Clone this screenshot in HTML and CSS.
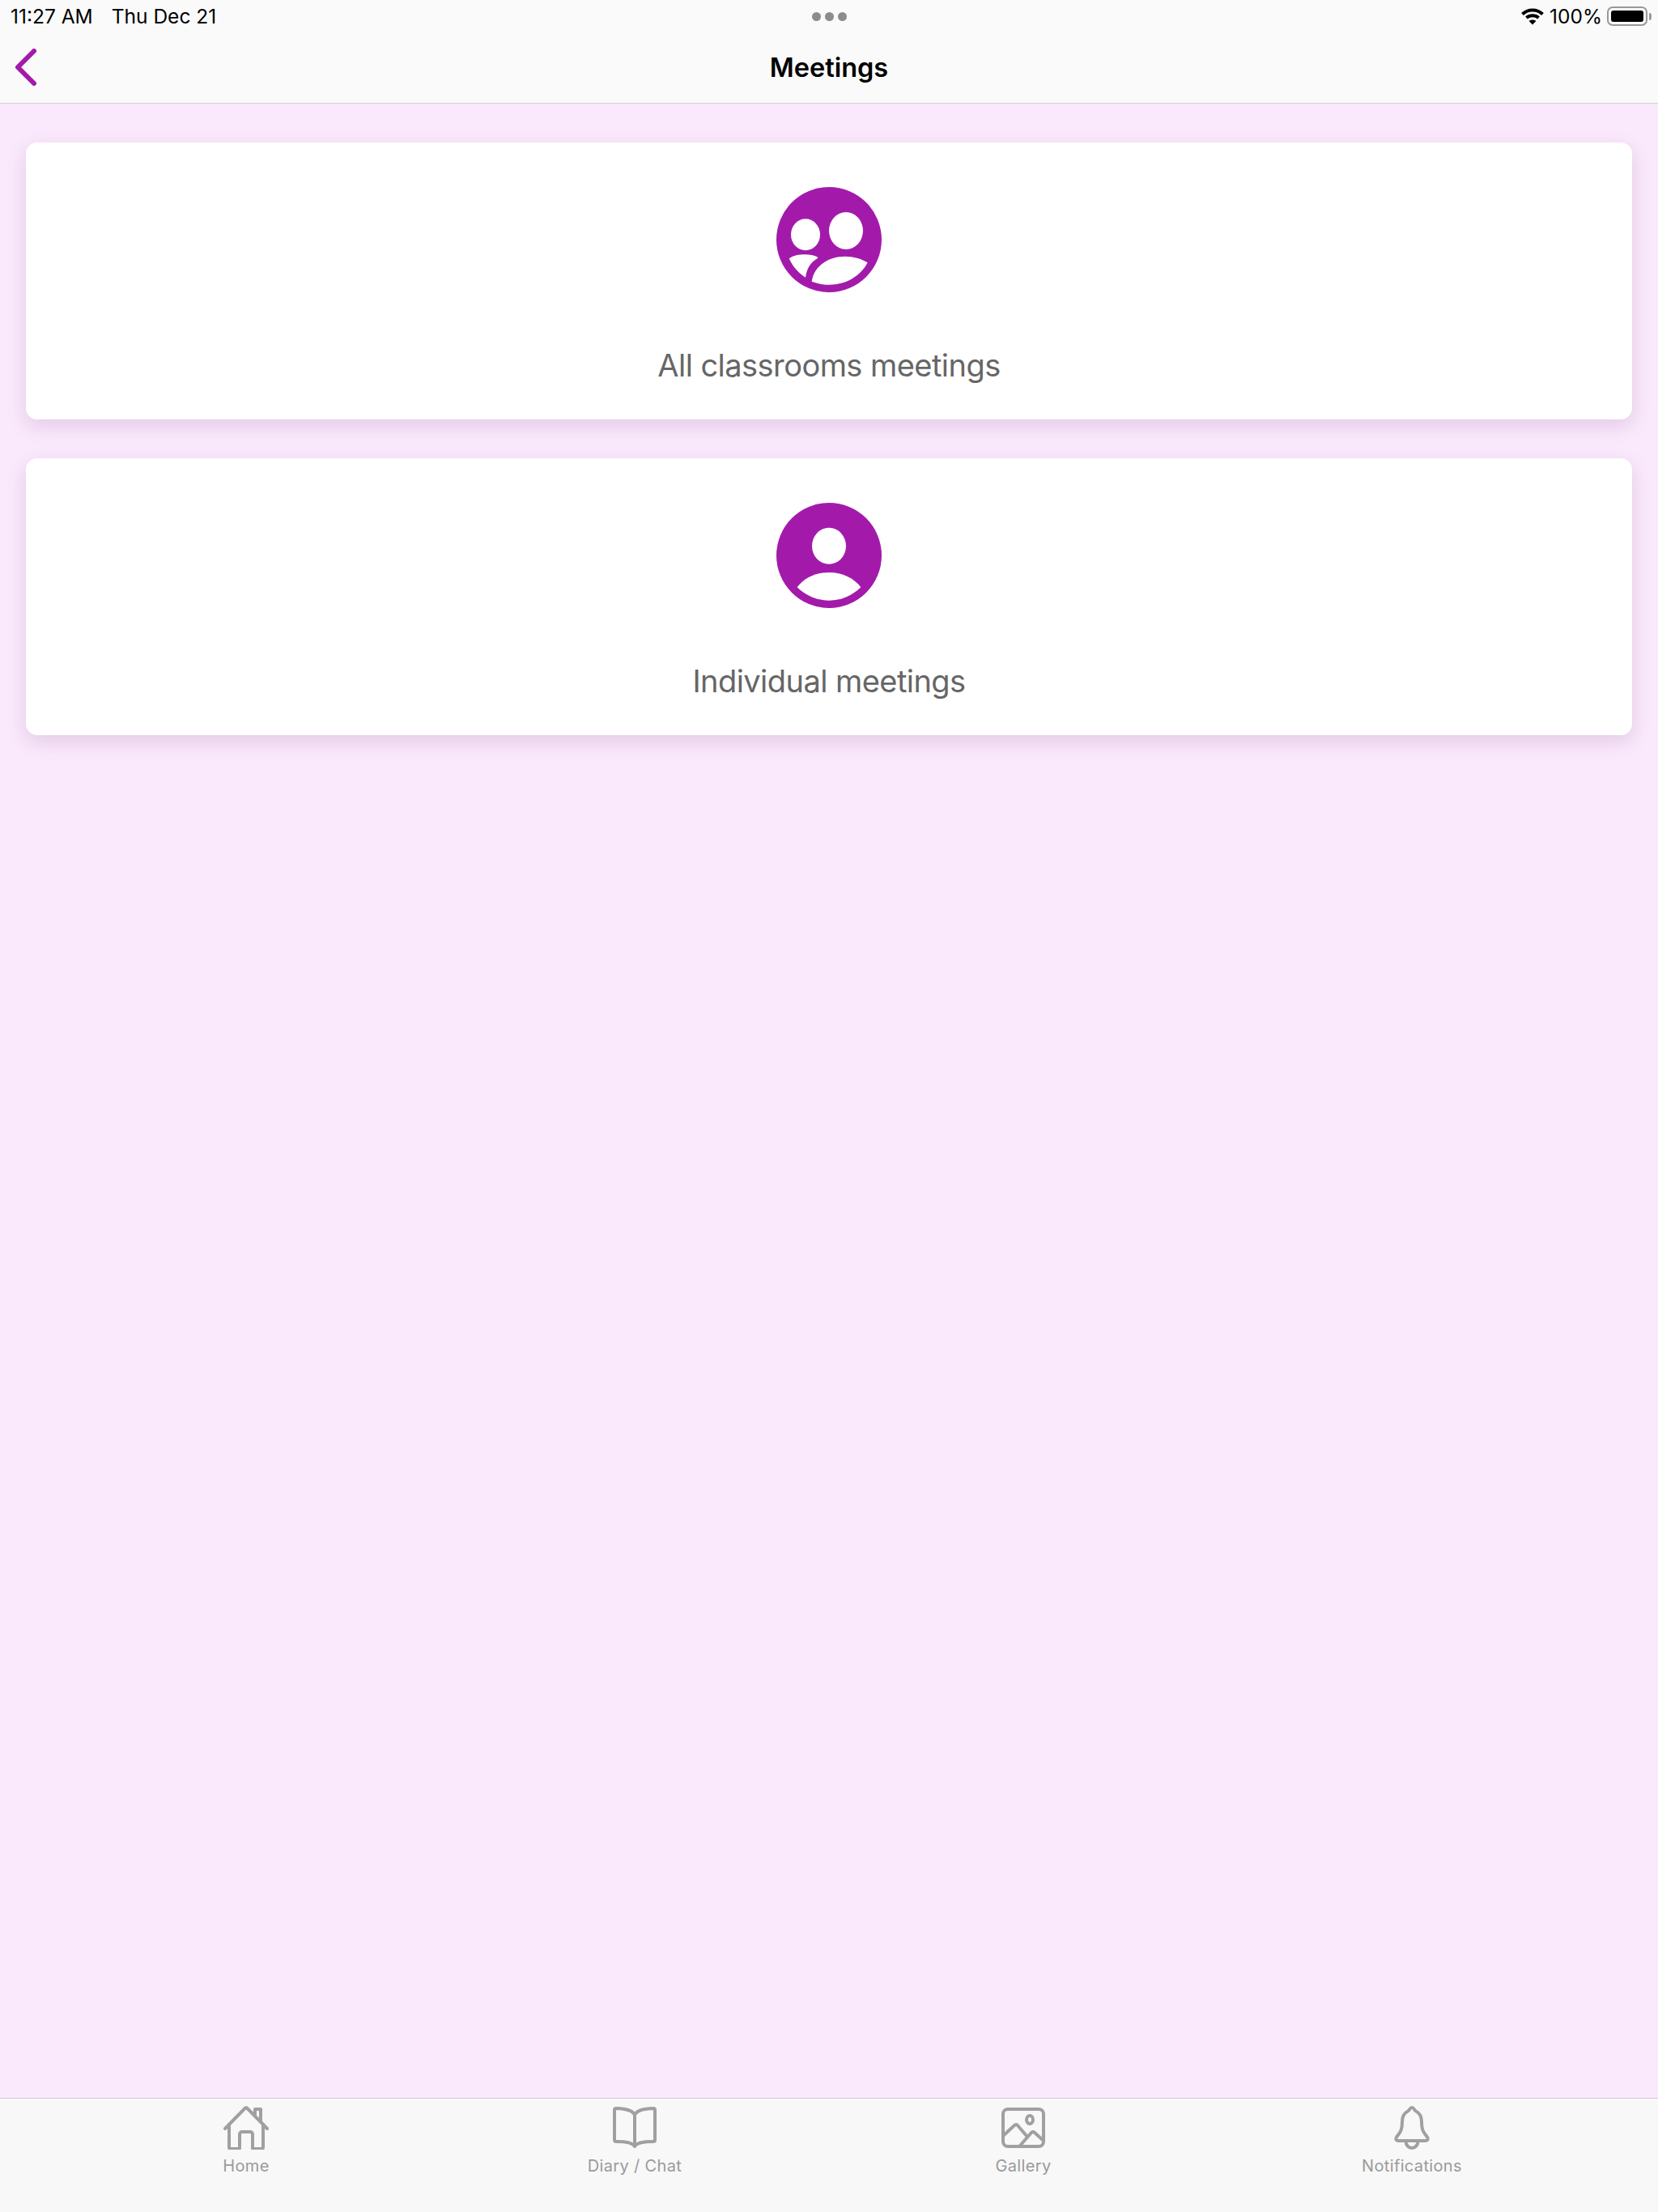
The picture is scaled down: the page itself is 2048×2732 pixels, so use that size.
FILE: index.html
```html
<!DOCTYPE html>
<html lang="en">
<head>
    <meta charset="UTF-8">
    <meta name="viewport" content="width=device-width, initial-scale=1.0">
    <title>Meetings</title>
    <link rel="stylesheet" href="styles.css">
</head>
<body>
    <header class="top-bar">
        <div class="status-bar">
            <div class="status-left">
                <span>11:27 AM</span>
                <span>Thu Dec 21</span>
            </div>
            <div class="status-dots"><i></i><i></i><i></i></div>
            <div class="status-right">
                <svg class="wifi" width="30" height="22" viewBox="0 0 30 22">
                    <path d="M2.500 8.500C9.500 1.800 20.500 1.800 27.500 8.500" />
                    <path d="M7.500 13C11.500 9.300 18.500 9.300 22.500 13" />
                    <path class="wifi-dot" d="M15 21.500L10.600 17C13 15 17 15 19.400 17Z" />
                </svg>
                <span>100%</span>
                <div class="battery"><div class="battery-fill"></div></div>
                <div class="battery-cap"></div>
            </div>
        </div>
        <div class="nav-bar">
            <svg class="back" width="28" height="46" viewBox="0 0 28 46">
                <path d="M24 3L4 23L24 43" />
            </svg>
            <h1>Meetings</h1>
        </div>
    </header>

    <main class="content">
        <div class="card">
            <svg class="card-icon" width="130" height="130" viewBox="35 20 130 130">
                <circle class="disc" cx="100" cy="85" r="65" />
                <ellipse cx="71" cy="78.700" rx="18" ry="19.500" />
                <ellipse cx="121" cy="74" rx="21" ry="23" />
                <path d="M50.700 108.300C56 104.500 63 103.300 70 103.300C76 103.300 82 104.500 85.500 106.200C86.500 106.800 86.300 107.800 85.500 108.300C77 113 72.500 121 71 131.700C62 126 55 118 50.700 108.300Z" />
                <path d="M78.700 136.700C81 119 98 105.700 120 105.700C130 105.700 140 108.500 147.700 113.300C139 130 121 140.700 100 140.700C92.500 140.700 85.500 139.300 78.700 136.700Z" />
            </svg>
            <div class="card-label">All classrooms meetings</div>
        </div>
        <div class="card">
            <svg class="card-icon" width="130" height="130" viewBox="35 20 130 130">
                <circle class="disc" cx="100" cy="85" r="65" />
                <ellipse cx="100" cy="73.300" rx="21" ry="22.500" />
                <path d="M60.700 124.300C69 113 83.500 106 100 106C116.500 106 131 113 139.300 124.300C129 134.500 115 140.700 100 140.700C85 140.700 71 134.500 60.700 124.300Z" />
            </svg>
            <div class="card-label">Individual meetings</div>
        </div>
    </main>

    <nav class="tab-bar">
        <div class="tab">
            <svg width="56" height="54" viewBox="0 0 56 54">
                <path d="M2 28L26.500 3a2 2 0 0 1 3 0L54 28" />
                <path d="M7 23V51a2 2 0 0 0 2 2H19a1 1 0 0 0 1-1V35a3 3 0 0 1 3-3h10a3 3 0 0 1 3 3V52a1 1 0 0 0 1 1h10a2 2 0 0 0 2-2V23" />
                <path d="M39 11V4h7V19" />
            </svg>
            <span>Home</span>
        </div>
        <div class="tab">
            <svg width="56" height="54" viewBox="0 0 56 54">
                <path d="M28 11C25 5 17 3.500 5 3a2 2 0 0 0-2 2V42a2 2 0 0 0 2 2C17 44 25 45 28 50C31 45 39 44 51 44a2 2 0 0 0 2-2V5a2 2 0 0 0-2-2C39 3.500 31 5 28 11V50" />
            </svg>
            <span>Diary / Chat</span>
        </div>
        <div class="tab">
            <svg width="54" height="54" viewBox="0 -2 54 54">
                <rect x="2" y="2" width="50" height="46" rx="6" />
                <ellipse cx="35" cy="15" rx="4" ry="5" />
                <path d="M2 35L16 22a3 3 0 0 1 4 0L31 35" />
                <path d="M23 47L37 31a3 3 0 0 1 4 0L52 41" />
            </svg>
            <span>Gallery</span>
        </div>
        <div class="tab">
            <svg width="46" height="54" viewBox="0 0 46 54">
                <path d="M23 2C25.500 2 26 5.500 28 6.500C33 9 35 13 35 20C35 31 38 33 42 38.500C43.500 41 42.500 43 40 43H6C3.500 43 2.500 41 4 38.500C8 33 11 31 11 20C11 13 13 9 18 6.500C20 5.500 20.500 2 23 2Z" />
                <path d="M15.500 43.500C15.500 48.500 19 52 23 52C27 52 30.500 48.500 30.500 43.500" />
            </svg>
            <span>Notifications</span>
        </div>
    </nav>
</body>
</html>
```

FILE: styles.css
```css
body {
    margin: 0;
    height: 2732px;
    display: flex;
    flex-direction: column;
    font-family: Inter, "Liberation Sans", sans-serif;
    background-color: #fae9fc;
}
.top-bar {
    height: 127px;
    background-color: #fafafa;
    border-bottom: 1px solid #d6d0d6;
    flex-shrink: 0;
}
.status-bar {
    height: 40px;
    padding: 0 8px;
    display: grid;
    grid-template-columns: 1fr auto 1fr;
    align-items: center;
    font-size: 24.5px;
    color: #000;
}
.status-left {
    display: flex;
    gap: 23px;
    padding-left: 5px;
}
.status-dots {
    display: flex;
    gap: 5px;
}
.status-dots i {
    width: 11px;
    height: 11px;
    border-radius: 50%;
    background-color: #8c8c8c;
}
.status-right {
    display: flex;
    align-items: center;
    justify-content: flex-end;
    gap: 6px;
}
.wifi {
    fill: none;
    stroke: #000;
    stroke-width: 4;
}
.wifi-dot {
    fill: #000;
    stroke: none;
}
.battery {
    width: 50px;
    height: 24px;
    box-sizing: border-box;
    padding: 3px;
    border: 2px solid #999;
    border-radius: 7px;
}
.battery-fill {
    height: 100%;
    background-color: #000;
    border-radius: 3px;
}
.battery-cap {
    width: 3px;
    height: 9px;
    margin-left: -4px;
    background-color: #999;
    border-radius: 0 3px 3px 0;
}
.nav-bar {
    height: 87px;
    position: relative;
    display: flex;
    align-items: center;
    justify-content: center;
}
.nav-bar h1 {
    margin: 0;
    font-size: 32.5px;
    font-weight: 600;
    color: #000;
}
.back {
    position: absolute;
    left: 18px;
    top: 20px;
    fill: none;
    stroke: #a31aab;
    stroke-width: 6;
    stroke-linecap: round;
    stroke-linejoin: round;
}
.content {
    flex: 1;
    padding: 48px 32px;
    display: flex;
    flex-direction: column;
    gap: 48px;
}
.card {
    height: 342px;
    box-sizing: border-box;
    padding-top: 55px;
    background-color: #fff;
    border-radius: 14px;
    box-shadow: 0 8px 24px rgba(110, 40, 110, 0.16);
    display: flex;
    flex-direction: column;
    align-items: center;
}
.card-icon {
    fill: #fff;
}
.card-icon .disc {
    fill: #a31aab;
}
.card-label {
    margin-top: 67px;
    font-size: 38px;
    line-height: 46px;
    letter-spacing: -0.55px;
    color: #666;
}
.tab-bar {
    height: 141px;
    flex-shrink: 0;
    box-sizing: border-box;
    padding: 9px 64px 0;
    background-color: #f8f8f8;
    border-top: 1px solid #d4c6d6;
    display: grid;
    grid-template-columns: repeat(4, 1fr);
}
.tab {
    display: flex;
    flex-direction: column;
    align-items: center;
    gap: 8px;
    font-size: 20px;
    line-height: 24px;
    letter-spacing: 0.35px;
    color: #9a9a9a;
}
.tab svg {
    fill: none;
    stroke: #a0a0a0;
    stroke-width: 4;
    stroke-linecap: round;
    stroke-linejoin: round;
}
```
